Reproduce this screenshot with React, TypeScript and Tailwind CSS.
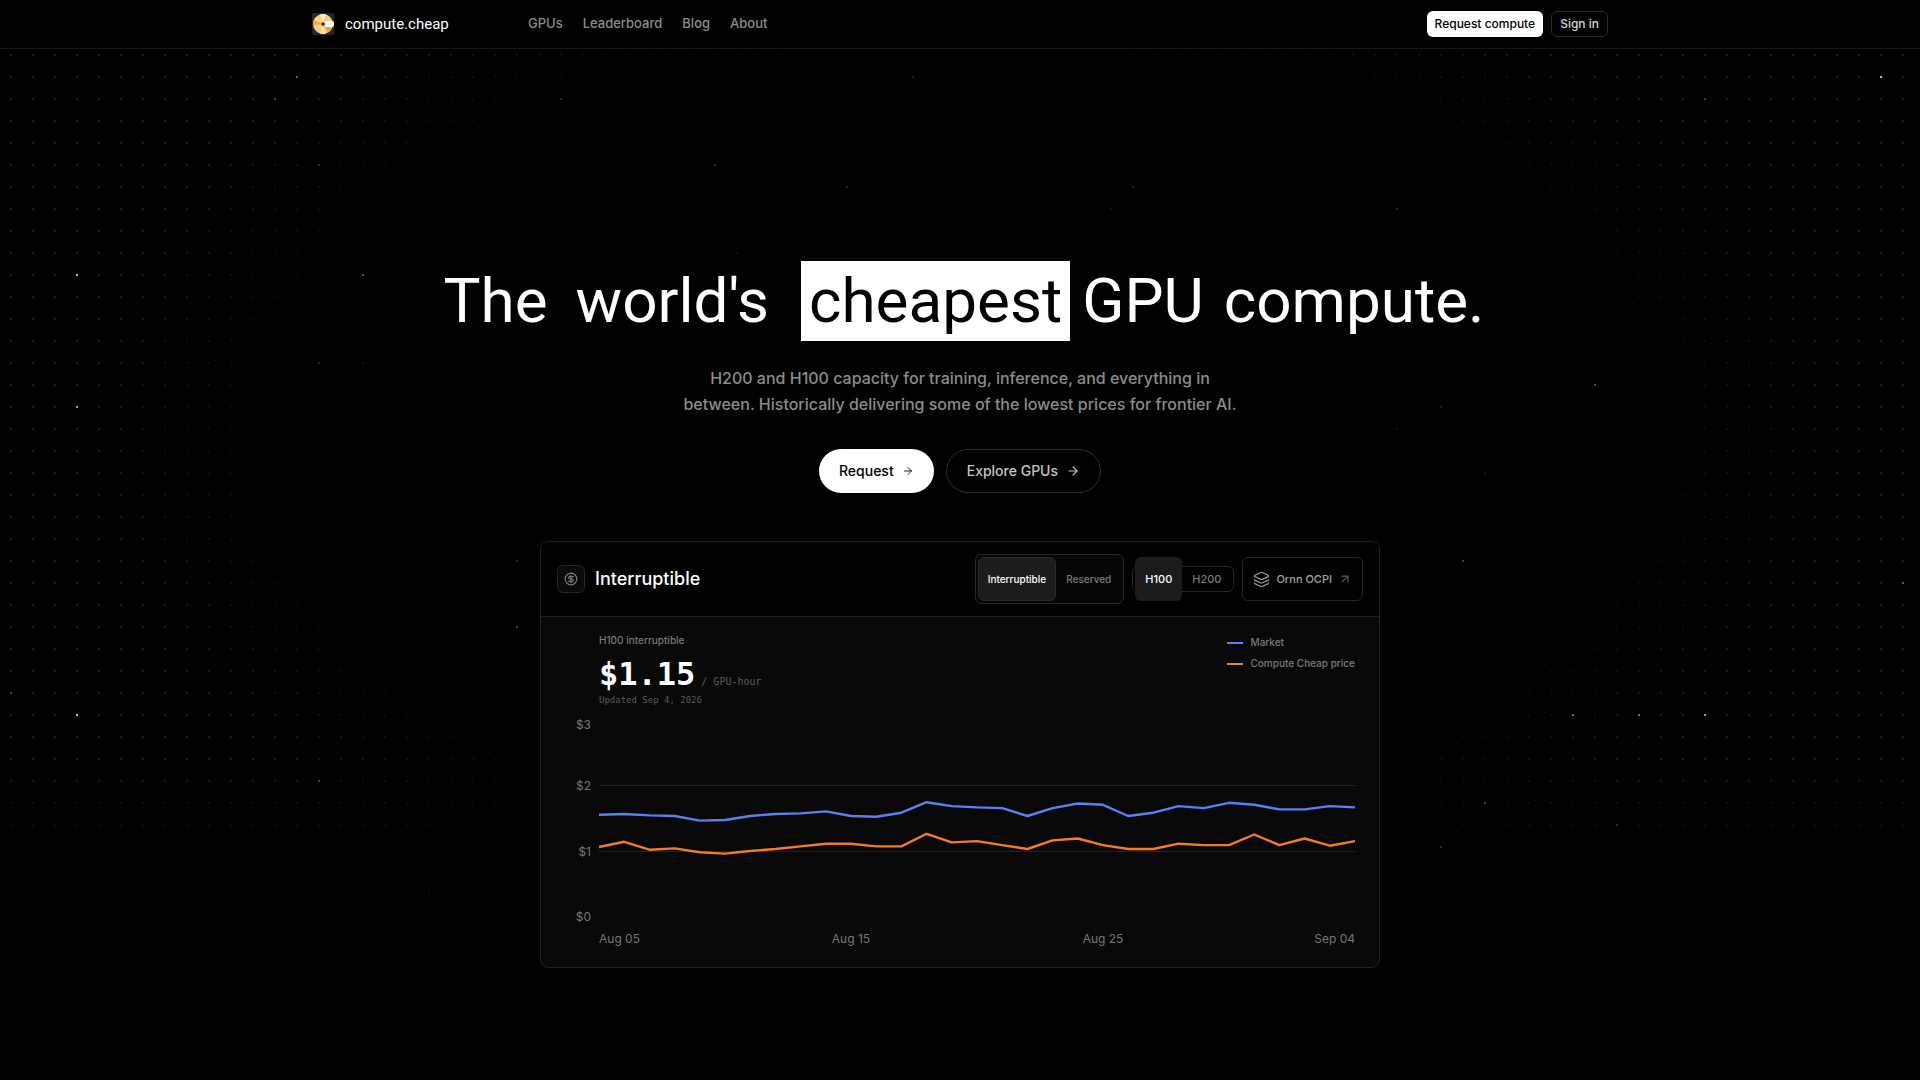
import { ArrowRight, ArrowUpRight, CircleDollarSign, Layers } from 'lucide-react';
import { useState } from 'react';

const NAV_LINKS = ['GPUs', 'Leaderboard', 'Blog', 'About'];

// [column, row, opacity] on the 22px dot grid
const STARS = [
  [13, 3, 0.3], [12, 4, 0.22], [25, 4, 0.14], [14, 7, 0.12], [3, 12, 0.65],
  [16, 12, 0.35], [14, 16, 0.15], [16, 16, 0.08], [3, 18, 0.6], [41, 3, 0.12],
  [32, 7, 0.18], [38, 8, 0.14], [51, 8, 0.12], [50, 9, 0.07], [33, 11, 0.06],
  [85, 3, 0.7], [77, 4, 0.15], [63, 9, 0.16], [72, 17, 0.3], [65, 18, 0.1],
  [63, 19, 0.08], [67, 21, 0.07], [66, 25, 0.25], [86, 26, 0.28], [23, 25, 0.15],
  [23, 28, 0.25], [0, 31, 0.2], [3, 32, 0.75], [14, 35, 0.2], [19, 40, 0.07],
  [71, 32, 0.4], [74, 32, 0.4], [77, 32, 0.55], [67, 36, 0.22], [73, 37, 0.12],
  [65, 38, 0.15],
];

const MARKET = [
  1.55, 1.56, 1.54, 1.53, 1.46, 1.47, 1.53, 1.56, 1.57, 1.6, 1.53, 1.52, 1.58,
  1.74, 1.68, 1.66, 1.65, 1.53, 1.65, 1.72, 1.7, 1.53, 1.58, 1.68, 1.65, 1.73,
  1.7, 1.63, 1.63, 1.68, 1.66,
];

const COMPUTE_CHEAP = [
  1.06, 1.14, 1.02, 1.04, 0.98, 0.96, 1.0, 1.03, 1.07, 1.11, 1.11, 1.07, 1.07,
  1.26, 1.13, 1.15, 1.09, 1.03, 1.16, 1.19, 1.09, 1.03, 1.03, 1.11, 1.09, 1.09,
  1.25, 1.09, 1.19, 1.08, 1.15,
];

const CHART_LEFT = 58;
const CHART_RIGHT = 814;
const ZERO_Y = 210;
const UNIT = 66;

const toPoints = (prices: number[]) =>
  prices
    .map((price, i) => {
      const x =
        CHART_LEFT + (i * (CHART_RIGHT - CHART_LEFT)) / (prices.length - 1);
      return `${x.toFixed(1)},${(ZERO_Y - price * UNIT).toFixed(1)}`;
    })
    .join(' ');

function Logo() {
  return (
    <svg width="22" height="22" viewBox="0 0 22 22" aria-hidden="true">
      <rect width="22" height="22" rx="2" fill="#26282b" />
      <circle cx="11" cy="11" r="10" fill="#f7cf7e" />
      <path d="M11 11 8 1.5A10 10 0 0 1 14 1.5Z" fill="#fdeecb" />
      <path d="M11 11 1.2 9A10 10 0 0 1 4 3.9Z" fill="#fbdda0" />
      <path d="M11 11 2 6.8A10 10 0 0 0 1.2 12Z" fill="#f2a53d" />
      <path d="M11 11 8 20.5A10 10 0 0 0 14 20.5Z" fill="#fbe2ab" />
      <path d="M11 11 16 19.6A10 10 0 0 0 20 15.4Z" fill="#ef9a45" />
      <rect x="12" y="8" width="10" height="6" rx="2" fill="#fff" />
      <circle cx="11" cy="11" r="2.6" fill="#e8b75f" />
      <circle cx="11" cy="11" r="1.5" fill="#1d1a14" />
    </svg>
  );
}

function Backdrop() {
  return (
    <div className="pointer-events-none absolute inset-0 overflow-hidden">
      <div className="absolute inset-0 bg-[radial-gradient(circle_at_11px_11px,#1c1c1c_1px,transparent_1px)] bg-[length:22px_22px]" />
      <div className="absolute inset-0 bg-[radial-gradient(ellipse_50%_53%_at_50%_40%,#000_68%,transparent_92%)]" />
      <div className="absolute inset-0 bg-[linear-gradient(to_bottom,transparent_70%,#000_80%)]" />
      <svg className="absolute inset-0 h-full w-full" aria-hidden="true">
        {STARS.map(([col, row, opacity]) => (
          <rect
            key={`${col}-${row}`}
            x={col * 22 + 10}
            y={row * 22 + 10}
            width="2"
            height="2"
            fill="#fff"
            opacity={opacity}
          />
        ))}
      </svg>
    </div>
  );
}

function Header() {
  return (
    <header className="relative border-b border-[#161616] bg-black">
      <div className="mx-auto flex h-12 max-w-[1296px] items-center">
        <a href="#" className="flex w-[216px] items-center gap-[11px]">
          <Logo />
          <span className="font-['Roboto',sans-serif] text-[15px] leading-5">
            compute.cheap
          </span>
        </a>
        <nav className="flex flex-1 items-center gap-5 text-[13px] font-medium text-[#8c8c8c]">
          {NAV_LINKS.map((link) => (
            <a key={link} href="#">
              {link}
            </a>
          ))}
        </nav>
        <div className="flex items-center gap-2 text-xs font-medium">
          <button className="h-[26px] rounded-md bg-white px-2 text-black">
            Request compute
          </button>
          <button className="h-[26px] rounded-md border border-[#2a2a2a] px-2 text-[#d4d4d4]">
            Sign in
          </button>
        </div>
      </div>
    </header>
  );
}

function PriceChart() {
  return (
    <svg
      viewBox="0 0 838 260"
      className="block w-full fill-[#76767a] text-xs"
      role="img"
      aria-label="H100 price history"
    >
      <g stroke="#222224">
        <line x1={CHART_LEFT} x2={CHART_RIGHT} y1="78.5" y2="78.5" />
        <line x1={CHART_LEFT} x2={CHART_RIGHT} y1="144.5" y2="144.5" />
      </g>
      <g textAnchor="end">
        <text x="50" y="22">$3</text>
        <text x="50" y="83">$2</text>
        <text x="50" y="149">$1</text>
        <text x="50" y="214">$0</text>
      </g>
      <text x={CHART_LEFT} y="236">Aug 05</text>
      <text x="310" y="236" textAnchor="middle">Aug 15</text>
      <text x="562" y="236" textAnchor="middle">Aug 25</text>
      <text x={CHART_RIGHT} y="236" textAnchor="end">Sep 04</text>
      <g fill="none" strokeWidth="2.4" strokeLinejoin="round">
        <polyline points={toPoints(MARKET)} stroke="#5f7ef0" />
        <polyline points={toPoints(COMPUTE_CHEAP)} stroke="#f47c26" />
      </g>
    </svg>
  );
}

function PriceCard() {
  const [mode, setMode] = useState('Interruptible');
  const [gpu, setGpu] = useState('H100');

  return (
    <section className="mx-auto mt-12 max-w-[840px] overflow-hidden rounded-lg border border-[#1f1f1f] bg-[#080809]">
      <div className="flex items-center justify-between border-b border-[#1f1f1f] bg-black px-4 py-3">
        <div className="flex items-center gap-2.5">
          <span className="flex size-7 items-center justify-center rounded-md border border-[#262626] bg-[#0b0b0b] text-[#7c7c7c]">
            <CircleDollarSign size={14} />
          </span>
          <h2 className="text-lg font-medium">{mode}</h2>
        </div>
        <div className="flex items-center gap-2 font-medium">
          <div className="flex rounded-md border border-[#262626] bg-[#060606] p-0.5 text-[10px]">
            {['Interruptible', 'Reserved'].map((item) => (
              <button
                key={item}
                onClick={() => setMode(item)}
                className={
                  item === mode
                    ? 'h-11 rounded-md border border-[#2b2b2b] bg-[#1c1c1d] px-[9px] text-white'
                    : 'h-11 rounded-md border border-transparent px-[9px] text-[#7a7a7a]'
                }
              >
                {item}
              </button>
            ))}
          </div>
          <div className="flex h-[26px] items-center rounded-md border border-[#262626] px-0.5 text-[11px]">
            {['H100', 'H200'].map((item) => (
              <button
                key={item}
                onClick={() => setGpu(item)}
                className={
                  item === gpu
                    ? 'h-11 rounded-md bg-[#1c1c1d] px-2.5 text-white'
                    : 'h-11 rounded-md px-2.5 text-[#7a7a7a]'
                }
              >
                {item}
              </button>
            ))}
          </div>
          <a
            href="#"
            className="flex h-11 items-center rounded-md border border-[#262626] px-2.5 text-[11px] text-[#a3a3a3]"
          >
            <Layers size={17} strokeWidth={1.6} />
            <span className="ml-1.5">Ornn OCPI</span>
            <ArrowUpRight size={14} className="ml-1.5 text-[#5c5c5c]" />
          </a>
        </div>
      </div>

      <div className="flex items-start justify-between pl-[58px] pr-6 pt-4">
        <div>
          <div className="text-[10px] font-medium leading-[15px] text-[#7a7a7a]">
            {gpu} interruptible
          </div>
          <div className="mt-1.5 flex items-baseline gap-1.5 font-['DejaVu_Sans_Mono',monospace]">
            <span className="text-[32px] font-bold leading-10">$1.15</span>
            <span className="text-[10px] text-[#5c5c5c]">/ GPU-hour</span>
          </div>
          <div className="font-['DejaVu_Sans_Mono',monospace] text-[9px] leading-[13px] text-[#5c5c5c]">
            Updated Sep 4, 2026
          </div>
        </div>
        <div className="mt-0.5 flex flex-col gap-1.5 text-[10px] font-medium leading-[15px] text-[#7a7a7a]">
          <div className="flex items-center gap-2">
            <span className="h-0.5 w-4 bg-[#5f7ef0]" />
            Market
          </div>
          <div className="flex items-center gap-2">
            <span className="h-0.5 w-4 bg-[#e8823a]" />
            Compute Cheap price
          </div>
        </div>
      </div>
      <PriceChart />
    </section>
  );
}

export default function App() {
  return (
    <div className="relative min-h-screen bg-black font-['Inter',sans-serif] text-white">
      <Backdrop />
      <Header />
      <main className="relative px-6 pb-28 pt-[212px]">
        <h1 className="flex flex-wrap items-center justify-center pl-2 font-['Roboto',sans-serif] text-[62px] leading-[80px]">
          <span className="mr-7">The</span>
          <span className="mr-8">world's</span>
          <span className="mr-3 bg-white px-2 text-black">cheapest</span>
          <span className="mr-5">GPU</span>
          <span>compute.</span>
        </h1>
        <p className="mx-auto mt-6 max-w-[560px] text-center text-base font-medium leading-[26px] text-[#8c8c8c]">
          H200 and H100 capacity for training, inference, and everything in
          between. Historically delivering some of the lowest prices for
          frontier AI.
        </p>
        <div className="mt-8 flex justify-center gap-3 text-sm font-medium">
          <button className="flex h-11 items-center gap-2 rounded-full bg-white px-5 text-black">
            Request
            <ArrowRight size={12} className="text-[#222]" />
          </button>
          <button className="flex h-11 items-center gap-2 rounded-full border border-[#2e2e2e] px-5 text-[#c4c4c4]">
            Explore GPUs
            <ArrowRight size={14} />
          </button>
        </div>
        <PriceCard />
      </main>
    </div>
  );
}
